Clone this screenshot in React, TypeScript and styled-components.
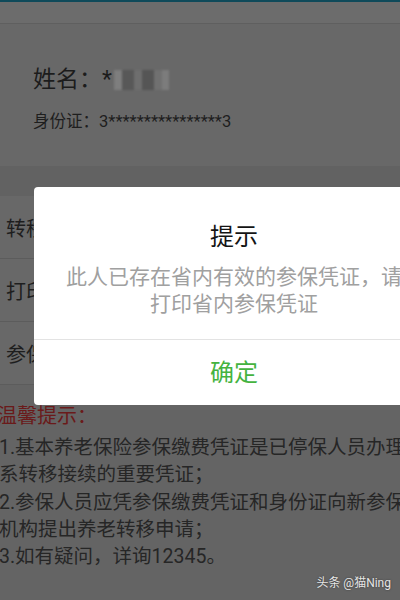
import React from "react";
import styled, { createGlobalStyle } from "styled-components";

const GlobalStyle = createGlobalStyle`
  html, body { margin: 0; padding: 0; }
  body {
    width: 400px;
    height: 600px;
    overflow: hidden;
    background: #626262;
    font-family: Roboto, "Noto Sans CJK SC", "Noto Sans", sans-serif;
  }
`;

const Screen = styled.div`
  position: relative;
  width: 400px;
  height: 600px;
  overflow: hidden;
  background: #646464;
  display: flex;
  flex-direction: column;
`;

const StatusStrip = styled.div`
  height: 2px;
  background: #0f4a5a;
`;

const NavBar = styled.div`
  height: 21px;
  background: #6c6c6c;
  border-bottom: 1px solid #5f5f5f;
`;

const InfoCard = styled.div`
  background: #686868;
  padding: 41px 0 32px 33px;
  display: flex;
  flex-direction: column;
  gap: 15px;
`;

const NameLine = styled.div`
  display: flex;
  align-items: center;
  font-size: 23px;
  line-height: 30px;
  color: #1c1c1c;
`;

const Blurred = styled.div`
  display: flex;
  margin-left: 2px;
  filter: blur(1.2px);
`;

const BlurCell = styled.span<{ $shade: string; $w: number }>`
  display: block;
  width: ${(p) => p.$w}px;
  height: 20px;
  background: ${(p) => p.$shade};
`;

const IdLine = styled.div`
  font-size: 16.5px;
  line-height: 24px;
  color: #1e1e1e;
`;

const Spacer = styled.div`
  height: 30px;
  background: #626262;
`;

const List = styled.div`
  display: flex;
  flex-direction: column;
  background: #686868;
`;

const Row = styled.div`
  height: 62px;
  border-bottom: 1px solid #5c5c5c;
  display: flex;
  align-items: center;
  padding-left: 6px;
  font-size: 20px;
  color: #1e1e1e;
  white-space: nowrap;
`;

const Tips = styled.div`
  margin-top: 17px;
  margin-left: -3px;
  display: flex;
  flex-direction: column;
  gap: 4px;
`;

const TipsTitle = styled.div`
  font-size: 20px;
  line-height: 28px;
  color: #6a1a1a;
`;

const TipsBody = styled.div`
  font-size: 19.5px;
  line-height: 27.25px;
  color: #262626;
  white-space: nowrap;
  margin-left: 2px;
`;

const Watermark = styled.div`
  position: absolute;
  right: 9px;
  bottom: 9px;
  font-size: 12px;
  line-height: 15px;
  color: #e6e6e6;
  text-shadow: 0 0 2px rgba(0, 0, 0, 0.5);
`;

const Dialog = styled.div`
  position: absolute;
  left: 34px;
  top: 187px;
  width: 400px;
  height: 218px;
  background: #ffffff;
  border-radius: 4px;
  display: flex;
  flex-direction: column;
`;

const DialogBody = styled.div`
  padding: 34px 30px 21px;
  display: flex;
  flex-direction: column;
  align-items: center;
  gap: 11px;
`;

const DialogTitle = styled.div`
  font-size: 24px;
  line-height: 32px;
  color: #141414;
`;

const DialogMessage = styled.div`
  font-size: 21px;
  line-height: 27px;
  color: #a0a0a0;
  text-align: center;
  white-space: nowrap;
`;

const DialogButton = styled.div`
  flex: 1;
  border-top: 1px solid #e3e3e3;
  display: flex;
  align-items: center;
  justify-content: center;
  padding-bottom: 5px;
  font-size: 24px;
  color: #44b33f;
`;

const blurCells = [
  { shade: "#7e7e7e", w: 8 },
  { shade: "#585858", w: 12 },
  { shade: "#6e6e6e", w: 8 },
  { shade: "#555555", w: 12 },
  { shade: "#707070", w: 8 },
  { shade: "#7c7c7c", w: 7 },
];

export default function App() {
  return (
    <>
      <GlobalStyle />
      <Screen>
        <StatusStrip />
        <NavBar />
        <InfoCard>
          <NameLine>
            姓名：*
            <Blurred>
              {blurCells.map((c, i) => (
                <BlurCell key={i} $shade={c.shade} $w={c.w} />
              ))}
            </Blurred>
          </NameLine>
          <IdLine>身份证：3****************3</IdLine>
        </InfoCard>
        <Spacer />
        <List>
          <Row>转移接续申请</Row>
          <Row>打印参保凭证</Row>
          <Row>参保缴费凭证</Row>
        </List>
        <Tips>
          <TipsTitle>温馨提示：</TipsTitle>
          <TipsBody>
            1.基本养老保险参保缴费凭证是已停保人员办理关
            <br />
            系转移接续的重要凭证；
            <br />
            2.参保人员应凭参保缴费凭证和身份证向新参保地
            <br />
            机构提出养老转移申请；
            <br />
            3.如有疑问，详询12345。
          </TipsBody>
        </Tips>
        <Watermark>头条 @猫Ning</Watermark>
        <Dialog>
          <DialogBody>
            <DialogTitle>提示</DialogTitle>
            <DialogMessage>
              此人已存在省内有效的参保凭证，请
              <br />
              打印省内参保凭证
            </DialogMessage>
          </DialogBody>
          <DialogButton>确定</DialogButton>
        </Dialog>
      </Screen>
    </>
  );
}
